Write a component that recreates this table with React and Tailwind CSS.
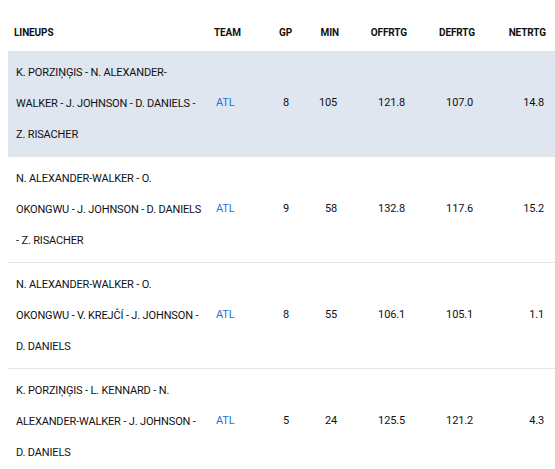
import React from "react";

const rows = [
  {
    lines: ["K. PORZIŅĢIS - N. ALEXANDER-", "WALKER - J. JOHNSON - D. DANIELS -", "Z. RISACHER"],
    team: "ATL", gp: "8", min: "105", off: "121.8", def: "107.0", net: "14.8", hl: true,
  },
  {
    lines: ["N. ALEXANDER-WALKER - O.", "OKONGWU - J. JOHNSON - D. DANIELS", "- Z. RISACHER"],
    team: "ATL", gp: "9", min: "58", off: "132.8", def: "117.6", net: "15.2",
  },
  {
    lines: ["N. ALEXANDER-WALKER - O.", "OKONGWU - V. KREJČÍ - J. JOHNSON -", "D. DANIELS"],
    team: "ATL", gp: "8", min: "55", off: "106.1", def: "105.1", net: "1.1",
  },
  {
    lines: ["K. PORZIŅĢIS - L. KENNARD - N.", "ALEXANDER-WALKER - J. JOHNSON -", "D. DANIELS"],
    team: "ATL", gp: "5", min: "24", off: "125.5", def: "121.2", net: "4.3",
  },
];

export default function App() {
  return (
    <div className="w-[555px] h-[469px] overflow-hidden bg-white pl-2" style={{ fontFamily: "Roboto, 'Liberation Sans', sans-serif" }}>
      <table className="table-fixed w-[547px] border-collapse text-[#111]">
        <colgroup>
          <col className="w-[198px]" />
          <col className="w-[50px]" />
          <col className="w-[42px]" />
          <col className="w-[47px]" />
          <col className="w-[68px]" />
          <col className="w-[68px]" />
          <col className="w-[74px]" />
        </colgroup>
        <thead>
          <tr className="h-[51px] text-[10px] font-bold uppercase text-[#111] tracking-[-0.1px]">
            <th className="text-left pl-1.5 pt-[13px] font-bold">LINEUPS</th>
            <th className="text-left pl-2 pt-[13px] font-bold">TEAM</th>
            <th className="text-right pr-[6px] pt-[13px] font-bold">GP</th>
            <th className="text-right pr-[6px] pt-[13px] font-bold">MIN</th>
            <th className="text-right pr-[6px] pt-[13px] font-bold">OFFRTG</th>
            <th className="text-right pr-[6px] pt-[13px] font-bold">DEFRTG</th>
            <th className="text-right pr-[9px] pt-[13px] font-bold">NETRTG</th>
          </tr>
        </thead>
        <tbody className="text-[11px] tracking-[-0.15px]">
          {rows.map((r, i) => (
            <tr key={i} className={r.hl ? "bg-[#dfe6ef] border-b border-[#e6e6e6]" : "border-b border-[#e6e6e6]"}>
              <td className="pl-2 py-[6px] leading-[31px] align-middle whitespace-nowrap">
                {r.lines.map((l, j) => (
                  <div key={j}>{l}</div>
                ))}
              </td>
              <td className="pl-2.5 align-middle text-[#2870dc]">{r.team}</td>
              <td className="text-right pr-[9px] align-middle">{r.gp}</td>
              <td className="text-right pr-[8px] align-middle">{r.min}</td>
              <td className="text-right pr-[8px] align-middle">{r.off}</td>
              <td className="text-right pr-[8px] align-middle">{r.def}</td>
              <td className="text-right pr-[11px] align-middle">{r.net}</td>
            </tr>
          ))}
        </tbody>
      </table>
    </div>
  );
}
